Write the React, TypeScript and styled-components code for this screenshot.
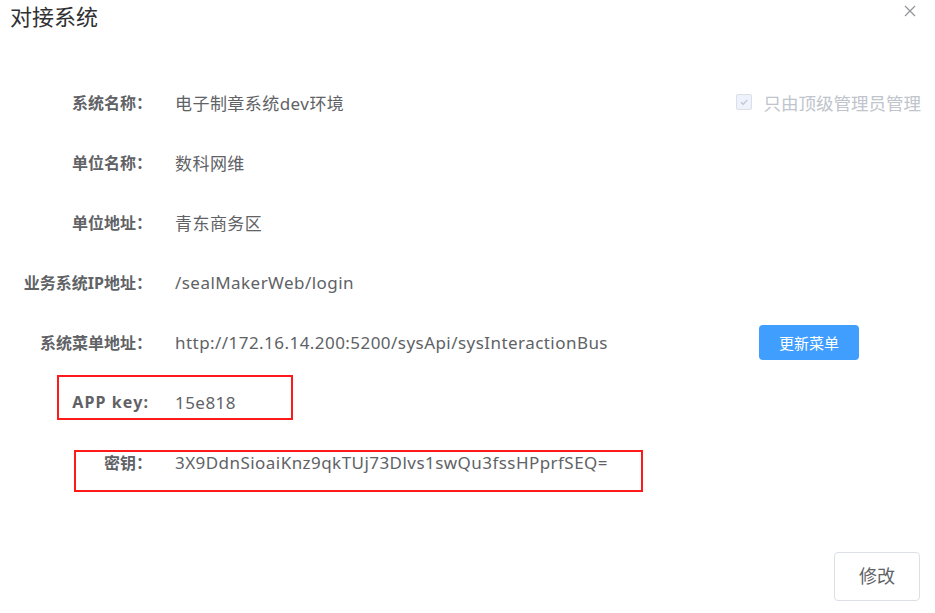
import React from "react";
import styled, { createGlobalStyle } from "styled-components";

const GlobalStyle = createGlobalStyle`
  html, body {
    margin: 0;
    padding: 0;
    background: #ffffff;
  }
  body {
    font-family: "Noto Sans", "Noto Sans CJK SC", sans-serif;
  }
  * {
    box-sizing: border-box;
  }
`;

const Dialog = styled.div`
  position: relative;
  width: 935px;
  height: 613px;
  background: #ffffff;
  display: flex;
  flex-direction: column;
`;

const Header = styled.div`
  display: flex;
  justify-content: space-between;
  align-items: flex-start;
  height: 40px;
  padding: 1px 18px 0 10px;
`;

const Title = styled.span`
  font-size: 22px;
  line-height: 30px;
  color: #303133;
`;

const CloseButton = styled.button`
  border: none;
  background: none;
  padding: 0;
  margin-top: 3px;
  width: 14px;
  height: 14px;
  cursor: pointer;
  color: #909399;
  display: flex;
  align-items: center;
  justify-content: center;
`;

const Body = styled.div`
  padding-top: 32px;
  display: flex;
  flex-direction: column;
`;

const Row = styled.div`
  position: relative;
  display: flex;
  align-items: center;
  height: 60px;
`;

const Label = styled.label<{ $wide?: boolean }>`
  width: 152px;
  flex-shrink: 0;
  padding-right: ${(p) => (p.$wide ? 3 : 0)}px;
  text-align: right;
  font-size: 16px;
  font-weight: 700;
  letter-spacing: ${(p) => (p.$wide ? 1.1 : 0)}px;
  color: #606266;
  white-space: nowrap;
`;

const Value = styled.div`
  flex: 1;
  margin-left: 23px;
  font-size: 17px;
  letter-spacing: 0.45px;
  color: #606266;
  white-space: nowrap;
`;

const Aside = styled.div<{ $right: number }>`
  display: flex;
  align-items: center;
  margin-right: ${(p) => p.$right}px;
`;

const CheckItem = styled.label`
  display: flex;
  align-items: center;
  gap: 12px;
  font-size: 17.5px;
  color: #c0c4cc;
  cursor: not-allowed;
`;

const CheckBox = styled.span`
  width: 16px;
  height: 16px;
  border: 1px solid #dcdfe6;
  border-radius: 2px;
  background: #edf2fc;
  display: flex;
  align-items: center;
  justify-content: center;
`;

const PrimaryButton = styled.button`
  width: 100px;
  height: 35px;
  border: none;
  border-radius: 4px;
  background: #409eff;
  color: #ffffff;
  font-family: inherit;
  font-size: 15px;
  cursor: pointer;
`;

const Footer = styled.div`
  display: flex;
  justify-content: flex-end;
  padding: 60px 15px 0 0;
`;

const PlainButton = styled.button`
  width: 86px;
  height: 49px;
  padding: 0 0 3px;
  border: 1px solid #dcdfe6;
  border-radius: 4px;
  background: #ffffff;
  color: #606266;
  font-family: inherit;
  font-size: 18px;
  cursor: pointer;
`;

const Mark = styled.div<{ $left: number; $top: number; $w: number; $h: number }>`
  position: absolute;
  left: ${(p) => p.$left}px;
  top: ${(p) => p.$top}px;
  width: ${(p) => p.$w}px;
  height: ${(p) => p.$h}px;
  border: 2px solid #ff1a1a;
  pointer-events: none;
`;

const fields = [
  { label: "系统名称：", value: "电子制章系统dev环境" },
  { label: "单位名称：", value: "数科网维" },
  { label: "单位地址：", value: "青东商务区" },
  { label: "业务系统IP地址：", value: "/sealMakerWeb/login" },
  { label: "系统菜单地址：", value: "http://172.16.14.200:5200/sysApi/sysInteractionBus" },
  { label: "APP key:", value: "15e818", wide: true },
  { label: "密钥：", value: "3X9DdnSioaiKnz9qkTUj73Dlvs1swQu3fssHPprfSEQ=" },
];

export default function App() {
  return (
    <>
      <GlobalStyle />
      <Dialog>
        <Header>
          <Title>对接系统</Title>
          <CloseButton aria-label="关闭">
            <svg width="12" height="12" viewBox="0 0 12 12" fill="none" stroke="currentColor" strokeWidth="1.2">
              <path d="M1 1L11 11M11 1L1 11" />
            </svg>
          </CloseButton>
        </Header>
        <Body>
          {fields.map((f, i) => (
            <Row key={f.label}>
              <Label $wide={f.wide}>{f.label}</Label>
              <Value>{f.value}</Value>
              {i === 0 && (
                <Aside $right={14}>
                  <CheckItem>
                    <CheckBox>
                      <svg width="10" height="10" viewBox="0 0 10 10" fill="none" stroke="#c0c4cc" strokeWidth="1.2">
                        <path d="M2 5.2L4.2 7.3L8.2 2.8" />
                      </svg>
                    </CheckBox>
                    只由顶级管理员管理
                  </CheckItem>
                </Aside>
              )}
              {i === 4 && (
                <Aside $right={76}>
                  <PrimaryButton>更新菜单</PrimaryButton>
                </Aside>
              )}
              {i === 5 && <Mark $left={57} $top={3} $w={236} $h={45} />}
              {i === 6 && <Mark $left={74} $top={18} $w={569} $h={42} />}
            </Row>
          ))}
        </Body>
        <Footer>
          <PlainButton>修改</PlainButton>
        </Footer>
      </Dialog>
    </>
  );
}
